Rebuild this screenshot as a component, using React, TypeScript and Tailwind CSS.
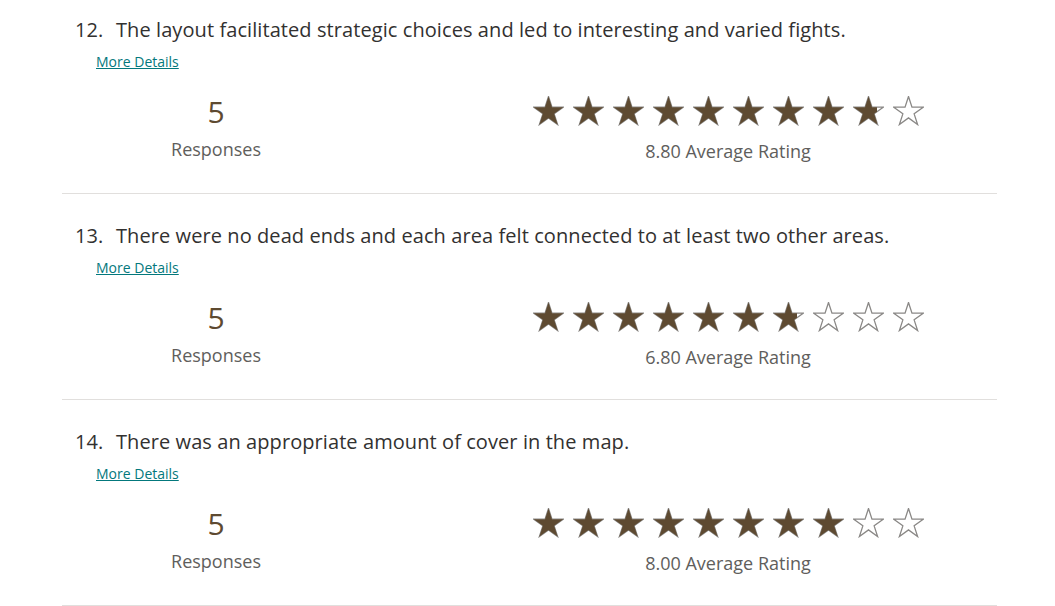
import React from 'react';

type Question = {
  num: number;
  text: string;
  responses: number;
  average: number;
};

const questions: Question[] = [
  { num: 12, text: 'The layout facilitated strategic choices and led to interesting and varied fights.', responses: 5, average: 8.8 },
  { num: 13, text: 'There were no dead ends and each area felt connected to at least two other areas.', responses: 5, average: 6.8 },
  { num: 14, text: 'There was an appropriate amount of cover in the map.', responses: 5, average: 8.0 },
];

const STAR_POINTS =
  '15.5,0.5 18.98,11.21 30.24,11.21 21.13,17.83 24.61,28.54 15.5,21.92 6.39,28.54 9.87,17.83 0.76,11.21 12.02,11.21';

// single star, fill is 0..1
const Star: React.FC<{ fill: number }> = ({ fill }) => (
  <div className="relative w-[31px] h-[30px]">
    <svg viewBox="0 0 31 30" className="absolute inset-0 w-[31px] h-[30px]">
      <polygon points={STAR_POINTS} fill="#ffffff" stroke="#8a8886" strokeWidth="1.3" strokeLinejoin="miter" />
    </svg>
    {fill > 0 && (
      <div className="absolute top-0 left-0 h-[30px] overflow-hidden" style={{ width: `${fill * 31}px` }}>
        <svg viewBox="0 0 31 30" className="w-[31px] h-[30px]">
          <polygon points={STAR_POINTS} fill="#5e4a31" />
        </svg>
      </div>
    )}
  </div>
);

const QuestionRow: React.FC<{ q: Question }> = ({ q }) => {
  const stars = Array.from({ length: 10 }, (_, i) => Math.max(0, Math.min(1, q.average - i)));
  return (
    <div className="border-b border-[#e1dfdd] pt-[28px] pb-[30px]">
      <div className="flex items-baseline pl-[13px] text-[20px] leading-[28px] text-[#323130] tracking-[0.08px]">
        <span className="w-[41px] shrink-0">{q.num}.</span>
        <span>{q.text}</span>
      </div>
      <div className="pl-[34px] mt-[8px] text-[14px] leading-[20px]">
        <a href="#" className="text-[#03787c] underline">More Details</a>
      </div>
      <div className="flex mt-[20px]">
        <div className="ml-[54px] w-[200px] flex flex-col items-center">
          <div className="text-[30px] leading-[40px] text-[#5e4a31]">{q.responses}</div>
          <div className="mt-[5px] text-[18px] leading-[24px] text-[#605e5c]">Responses</div>
        </div>
        <div className="ml-[212px] w-[400px] flex flex-col items-center">
          <div className="flex gap-[9px] mt-[4px]">
            {stars.map((f, i) => (
              <Star key={i} fill={f} />
            ))}
          </div>
          <div className="mt-[13px] text-[18px] leading-[24px] text-[#605e5c]">
            {q.average.toFixed(2)} Average Rating
          </div>
        </div>
      </div>
    </div>
  );
};

export default function App() {
  return (
    <div
      className="w-[1055px] h-[606px] overflow-hidden bg-white"
      style={{ fontFamily: '"Segoe UI", "Open Sans", "Noto Sans", sans-serif' }}
    >
      <div className="ml-[62px] w-[935px] -mt-[12px]">
        {questions.map((q) => (
          <QuestionRow key={q.num} q={q} />
        ))}
      </div>
    </div>
  );
}
